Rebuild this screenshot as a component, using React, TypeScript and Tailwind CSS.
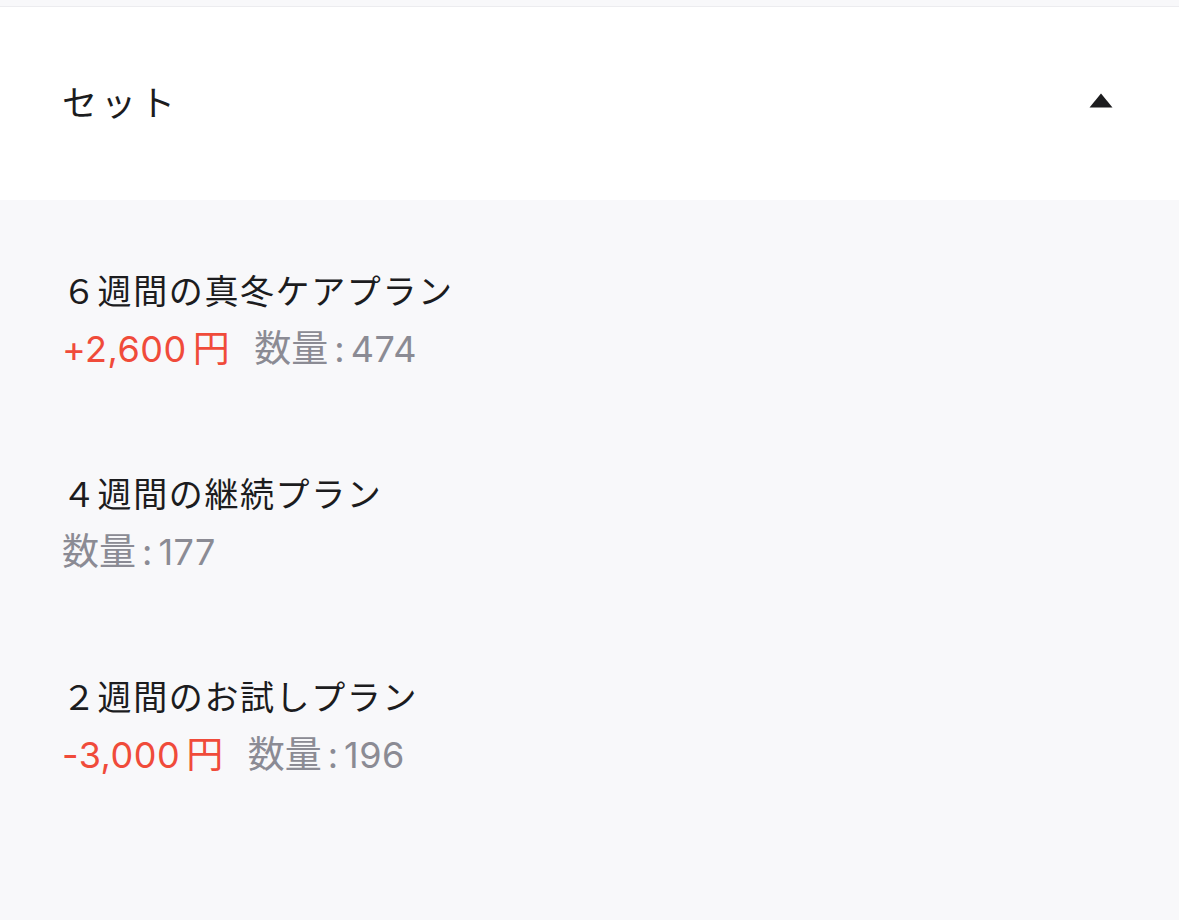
import React from 'react';

interface PlanItem {
  name: string;
  price?: string;
  quantity: number;
}

const plans: PlanItem[] = [
  { name: '６週間の真冬ケアプラン', price: '+2,600', quantity: 474 },
  { name: '４週間の継続プラン', quantity: 177 },
  { name: '２週間のお試しプラン', price: '-3,000', quantity: 196 },
];

const App: React.FC = () => {
  return (
    <div
      className="w-[1179px] h-[920px] bg-[#f8f8fa] overflow-hidden"
      style={{ fontFamily: '"Noto Sans CJK JP", "Noto Sans", sans-serif' }}
    >
      <div className="h-[7px] bg-[#f8f8fa] border-b border-[#ececef]" />

      <div className="h-[193px] bg-white flex items-center justify-between pl-[62px] pr-[66px]">
        <h2 className="text-[35px] leading-[48px] text-[#1c1c1e] tracking-[4px] -mt-[6px]">セット</h2>
        <svg width="24" height="15" viewBox="0 0 24 15" className="-mt-[6px]">
          <path d="M12 0.5 L23.5 14.5 L0.5 14.5 Z" fill="#1c1c1e" />
        </svg>
      </div>

      <div className="px-[62px] pt-[66px] flex flex-col gap-[96px]">
        {plans.map(plan => (
          <div key={plan.name}>
            <p className="text-[34px] leading-[48px] text-[#1c1c1e] tracking-[1.6px]">{plan.name}</p>
            <div
              className="mt-[11px] flex items-center gap-[24px] text-[36px] leading-[48px]"
              style={{ fontFamily: 'Inter, "Noto Sans CJK JP", sans-serif' }}
            >
              {plan.price && (
                <span className="text-[#f04b3a] tracking-[0.5px]">
                  {plan.price}
                  <span className="ml-[6px] text-[37px]">円</span>
                </span>
              )}
              <span className="text-[#8b8b94]">
                <span className="text-[37px]">数量</span>
                <span className="mx-[6px]">:</span>
                <span className="tracking-[0.5px]">{plan.quantity}</span>
              </span>
            </div>
          </div>
        ))}
      </div>
    </div>
  );
};

export default App;
